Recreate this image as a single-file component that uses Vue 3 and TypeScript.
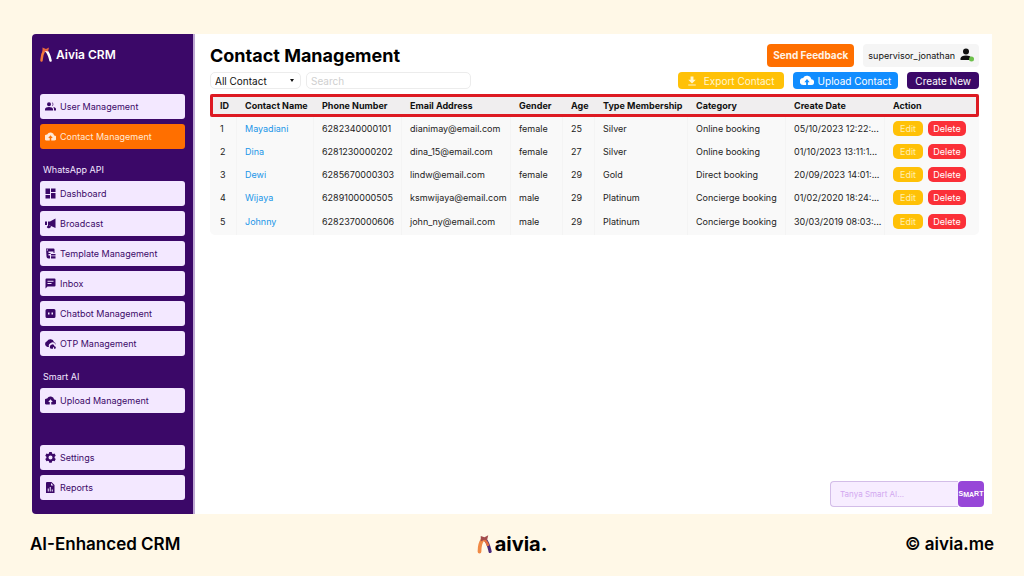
<script setup lang="ts">
import { ref } from 'vue'

interface NavItem {
  label: string
  icon: string
  active?: boolean
}
interface NavGroup {
  title?: string
  items: NavItem[]
}
interface Contact {
  id: number
  name: string
  phone: string
  email: string
  gender: string
  age: number
  membership: string
  category: string
  created: string
}

const icons: Record<string, string> = {
  users:
    'M9 11.500a4 4 0 1 0 0-8 4 4 0 0 0 0 8zM1 20v-2.500c0-3 4-4.500 8-4.500s8 1.500 8 4.500V20zM15 3.700a4 4 0 0 1 0 7.600 6 6 0 0 0 0-7.600zM18.800 20H23v-2.500c0-2.500-2.500-3.800-5.500-4.300 1 1 1.500 2.400 1.500 4.300z',
  cloud:
    'M19.400 10A7.500 7.500 0 0 0 5.300 8 6 6 0 0 0 6 20h4.500v-5H7.500L12 9.500l4.500 5.500h-3v5H19a5 5 0 0 0 .4-10z',
  dashboard: 'M2 2h9v11H2zM13 2h9v7h-9zM2 15h9v7H2zM13 11h9v11h-9z',
  megaphone:
    'M22 2v19l-9-4a4.500 4.500 0 0 1-8.500 2L7 16h2.500a1.500 1.500 0 0 0 2 1V16H7V8h4zM1 8h4v7H1z',
  template:
    'M3 2h15a2 2 0 0 1 2 2v7h-2V8H8v3h4v2H8v3h3v6H8a4 4 0 0 1-4-4zM13 13h9v3h-9zM13 17.500h9V22h-9zM4.500 4v2H7V4z',
  inbox:
    'M4 2h16a2 2 0 0 1 2 2v12a2 2 0 0 1-2 2H6l-4 4V4a2 2 0 0 1 2-2zM6 6.500v2h12v-2zM6 11v2h8v-2z',
  chatbot:
    'M5 3h14a3 3 0 0 1 3 3v12a3 3 0 0 1-3 3H5a3 3 0 0 1-3-3V6a3 3 0 0 1 3-3zM7 10v4h3v-4zM14 10v4h3v-4z',
  otp:
    'M19 9A7.500 7.500 0 0 0 5 7.500 6 6 0 0 0 6 19h3a6.500 6.500 0 0 1 13-4.500A5 5 0 0 0 19 9zM11 19a4.500 4.500 0 0 1 9-1.500 2.600 2.600 0 0 1 1 5h-2v-3h-2v3h-3a2.500 2.500 0 0 1-3-3.500z',
  gear:
    'M9.500 1h5l.6 3 2 1.200 3-1 2.400 4.200-2.300 2v2.600l2.300 2-2.400 4.300-3-1-2 1.200-.6 3h-5l-.6-3-2-1.200-3 1L1.500 15l2.300-2v-2.600l-2.300-2L3.900 4.200l3 1 2-1.200zM12 8a4 4 0 1 0 0 8 4 4 0 0 0 0-8z',
  report:
    'M5 1h9l6 6v16H3V3a2 2 0 0 1 2-2zM13 3v5h5zM6.500 14v6h2v-6zM10.500 11v9h2v-9zM14.500 16v4h2v-4z',
  download: 'M8.500 1h7v8H21l-9 9-9-9h5.500zM3 20.500h18V23H3z',
}

const groups: NavGroup[] = [
  {
    items: [
      { label: 'User Management', icon: 'users' },
      { label: 'Contact Management', icon: 'cloud', active: true },
    ],
  },
  {
    title: 'WhatsApp API',
    items: [
      { label: 'Dashboard', icon: 'dashboard' },
      { label: 'Broadcast', icon: 'megaphone' },
      { label: 'Template Management', icon: 'template' },
      { label: 'Inbox', icon: 'inbox' },
      { label: 'Chatbot Management', icon: 'chatbot' },
      { label: 'OTP Management', icon: 'otp' },
    ],
  },
  { title: 'Smart AI', items: [{ label: 'Upload Management', icon: 'cloud' }] },
  {
    items: [
      { label: 'Settings', icon: 'gear' },
      { label: 'Reports', icon: 'report' },
    ],
  },
]

const columns = [
  { key: 'id', label: 'ID' },
  { key: 'name', label: 'Contact Name' },
  { key: 'phone', label: 'Phone Number' },
  { key: 'email', label: 'Email Address' },
  { key: 'gender', label: 'Gender' },
  { key: 'age', label: 'Age' },
  { key: 'membership', label: 'Type Membership' },
  { key: 'category', label: 'Category' },
  { key: 'created', label: 'Create Date' },
  { key: 'action', label: 'Action' },
]

const contacts: Contact[] = [
  { id: 1, name: 'Mayadiani', phone: '6282340000101', email: 'dianimay@email.com', gender: 'female', age: 25, membership: 'Silver', category: 'Online booking', created: '05/10/2023 12:22:...' },
  { id: 2, name: 'Dina', phone: '6281230000202', email: 'dina_15@email.com', gender: 'female', age: 27, membership: 'Silver', category: 'Online booking', created: '01/10/2023 13:11:1...' },
  { id: 3, name: 'Dewi', phone: '6285670000303', email: 'lindw@email.com', gender: 'female', age: 29, membership: 'Gold', category: 'Direct booking', created: '20/09/2023 14:01:...' },
  { id: 4, name: 'Wijaya', phone: '6289100000505', email: 'ksmwijaya@email.com', gender: 'male', age: 29, membership: 'Platinum', category: 'Concierge booking', created: '01/02/2020 18:24:...' },
  { id: 5, name: 'Johnny', phone: '6282370000606', email: 'john_ny@email.com', gender: 'male', age: 29, membership: 'Platinum', category: 'Concierge booking', created: '30/03/2019 08:03:...' },
]

const filter = ref('All Contact')
const search = ref('')
const question = ref('')
</script>

<template>
  <div class="page">
    <div class="window">
      <aside class="sidebar">
        <div class="brand">
          <svg class="brand-mark" viewBox="0 0 24 30" aria-hidden="true">
            <path d="M8 8C4 14 4 20 3 27" stroke="#f47a3c" stroke-width="5" fill="none" stroke-linecap="round" />
            <path d="M12 7c6 5 7 12 9 20" stroke="#fff" stroke-width="5" fill="none" stroke-linecap="round" />
            <path d="M5 1l7 3 6-3-2 8-5-1-6 3z" fill="#e9683f" />
          </svg>
          <span>Aivia CRM</span>
        </div>
        <nav class="nav">
          <section v-for="(group, g) in groups" :key="g" class="group">
            <h2 v-if="group.title" class="group-title">{{ group.title }}</h2>
            <a
              v-for="item in group.items"
              :key="item.label"
              href="#"
              class="nav-item"
              :class="{ active: item.active }"
            >
              <svg class="nav-icon" viewBox="1 1 22 22" aria-hidden="true">
                <path :d="icons[item.icon]" fill="currentColor" fill-rule="evenodd" />
              </svg>
              <span>{{ item.label }}</span>
            </a>
          </section>
        </nav>
      </aside>

      <main class="content">
        <header class="top">
          <h1>Contact Management</h1>
          <div class="top-actions">
            <button type="button" class="feedback">Send Feedback</button>
            <button type="button" class="user">
              <span>supervisor_jonathan</span>
              <svg class="user-icon" viewBox="0 0 28 28" aria-hidden="true">
                <circle cx="12" cy="7" r="6" fill="#111" />
                <path d="M1 24v-3c0-4 5-6 11-6s11 2 11 6v3z" fill="#111" />
                <circle cx="23" cy="22" r="5" fill="#6cc04a" />
              </svg>
            </button>
          </div>
        </header>

        <div class="toolbar">
          <div class="select-wrap">
            <select v-model="filter" class="field" aria-label="Contact filter">
              <option>All Contact</option>
            </select>
          </div>
          <input v-model="search" class="field search" type="text" placeholder="Search" aria-label="Search" />
          <div class="tool-actions">
            <button type="button" class="tool export">
              <svg class="export-icon" viewBox="0 0 24 24" aria-hidden="true">
                <path :d="icons.download" fill="currentColor" />
              </svg>
              Export Contact
            </button>
            <button type="button" class="tool upload">
              <svg class="upload-icon" viewBox="0 1 24 24" aria-hidden="true">
                <path :d="icons.cloud" fill="currentColor" />
              </svg>
              Upload Contact
            </button>
            <button type="button" class="tool create">Create New</button>
          </div>
        </div>

        <table class="contacts">
          <colgroup>
            <col v-for="col in columns" :key="col.key" :class="'col-' + col.key" />
          </colgroup>
          <thead>
            <tr>
              <th v-for="col in columns" :key="col.key" scope="col">{{ col.label }}</th>
            </tr>
          </thead>
          <tbody>
            <tr v-for="c in contacts" :key="c.id">
              <td>{{ c.id }}</td>
              <td><a href="#" class="name">{{ c.name }}</a></td>
              <td>{{ c.phone }}</td>
              <td>{{ c.email }}</td>
              <td>{{ c.gender }}</td>
              <td>{{ c.age }}</td>
              <td>{{ c.membership }}</td>
              <td>{{ c.category }}</td>
              <td>{{ c.created }}</td>
              <td>
                <div class="row-actions">
                  <button type="button" class="edit">Edit</button>
                  <button type="button" class="delete">Delete</button>
                </div>
              </td>
            </tr>
          </tbody>
        </table>
      </main>

      <form class="smart" @submit.prevent>
        <input v-model="question" type="text" placeholder="Tanya Smart AI..." aria-label="Tanya Smart AI" />
        <button type="submit" aria-label="Smart AI">
          <svg viewBox="0 0 26 26" aria-hidden="true">
            <text class="smart-text" x="13" y="16" text-anchor="middle" dy="-1 1 0 -1 0">SMART</text>
          </svg>
        </button>
      </form>
    </div>

    <footer class="footer">
      <span>AI-Enhanced CRM</span>
      <div class="logo">
        <svg class="logo-mark" viewBox="0 0 24 30" aria-hidden="true">
          <path d="M13 8c5 5 6 11 8 19" stroke="#4a2a7b" stroke-width="5" fill="none" stroke-linecap="round" />
          <path d="M12 8c3 3 5 6 6 10" stroke="#e8703c" stroke-width="4" fill="none" />
          <path d="M9 8C4 14 4 20 4 27" stroke="#f08a45" stroke-width="6" fill="none" stroke-linecap="round" />
          <path d="M6 2l6 2 6-3-2 8-4-1-6 3z" fill="#a34c4c" />
        </svg>
        <span>aivia.</span>
      </div>
      <span class="site">© aivia.me</span>
    </footer>
  </div>
</template>

<style>
body {
  margin: 0;
  background: #fff8e7;
}
</style>

<style scoped>
.page,
.page * {
  box-sizing: border-box;
}
.page {
  min-height: 100vh;
  display: flex;
  flex-direction: column;
  padding: 34px 32px 2px;
  background: #fff8e7;
  color: #111;
  font-family: Inter, "Liberation Sans", sans-serif;
}
button,
input,
select {
  font-family: inherit;
  margin: 0;
}
button {
  border: 0;
  cursor: pointer;
}
a {
  text-decoration: none;
}
.window {
  position: relative;
  flex: 1;
  display: flex;
  background: #fff;
  border-radius: 4px 0 0 4px;
}
.sidebar {
  width: 163px;
  flex: none;
  padding: 10px 8px 13px;
  background: #3b0868;
  border-right: 2px solid #bfa9d3;
  border-radius: 4px 0 0 4px;
}
.brand {
  display: flex;
  align-items: center;
  gap: 4px;
  height: 20px;
  color: #fff;
  font-size: 12px;
  font-weight: 600;
}
.brand-mark {
  width: 12px;
  height: 15px;
}
.nav {
  display: flex;
  flex-direction: column;
  margin-top: 30px;
}
.group {
  display: flex;
  flex-direction: column;
  gap: 5px;
}
.group:last-child {
  margin-top: 32px;
}
.group-title {
  height: 27px;
  margin: 0;
  padding: 14px 3px 0;
  color: #f3e8ff;
  font-size: 9px;
  line-height: 14px;
  font-weight: 400;
}
.nav-item {
  display: flex;
  align-items: center;
  gap: 4px;
  height: 25px;
  padding: 0 5px;
  border-radius: 3px;
  background: #f3e8ff;
  color: #3b0868;
  font-size: 9px;
  font-weight: 400;
  white-space: nowrap;
}
.nav-item.active {
  background: #ff6f00;
  color: #ffe9d6;
}
.nav-icon {
  width: 11px;
  height: 11px;
}
.content {
  flex: 1;
  min-width: 0;
  padding: 9px 13px 0 15px;
}
.top {
  display: flex;
  align-items: center;
  justify-content: space-between;
  height: 24px;
}
h1 {
  margin: 0;
  font-size: 18px;
  font-weight: 700;
  color: #000;
}
.top-actions {
  display: flex;
  gap: 9px;
}
.feedback {
  height: 23px;
  padding: 0 6px;
  border-radius: 4px;
  background: #ff6f00;
  color: #fff3e6;
  font-size: 10px;
  font-weight: 700;
}
.user {
  display: flex;
  align-items: center;
  gap: 5px;
  height: 23px;
  padding: 0 5px;
  border-radius: 4px;
  background: #f5f5f5;
  color: #111;
  font-size: 9px;
}
.user-icon {
  width: 14px;
  height: 14px;
}
.toolbar {
  display: flex;
  align-items: center;
  gap: 5px;
  height: 17px;
  margin: 5px 0;
}
.field {
  height: 17px;
  padding: 0 4px;
  border: 1px solid #ececec;
  border-radius: 5px;
  background: #fff;
  color: #111;
  font-size: 10px;
  outline: none;
}
.select-wrap {
  position: relative;
  width: 91px;
}
.select-wrap select {
  display: block;
  width: 100%;
  appearance: none;
}
.select-wrap::after {
  content: "";
  position: absolute;
  right: 7px;
  top: 7px;
  border: 2px solid transparent;
  border-top: 3px solid #111;
  border-bottom: 0;
}
.search {
  width: 165px;
}
.search::placeholder {
  color: #cfcfcf;
}
.tool-actions {
  display: flex;
  gap: 9px;
  margin-left: auto;
}
.tool {
  display: flex;
  align-items: center;
  height: 17px;
  padding: 0 8px;
  border-radius: 4px;
  color: #fff;
  font-size: 10px;
  white-space: nowrap;
}
.export {
  gap: 7px;
  padding: 0 9px;
  background: #ffc107;
  color: #fff6d0;
}
.upload {
  gap: 4px;
  padding: 0 7px;
  background: #118dff;
}
.create {
  background: #3b0868;
}
.export-icon {
  width: 10px;
  height: 10px;
}
.upload-icon {
  width: 14px;
  height: 14px;
}
.contacts {
  width: 100%;
  table-layout: fixed;
  border-collapse: separate;
  border-spacing: 0;
  font-size: 9px;
  line-height: 13px;
}
.col-id { width: 27px; }
.col-name { width: 77px; }
.col-phone { width: 88px; }
.col-email { width: 109px; }
.col-gender { width: 52px; }
.col-age { width: 32px; }
.col-membership { width: 93px; }
.col-category { width: 98px; }
.col-created { width: 99px; }
.col-action { width: 94px; }
th,
td {
  padding: 0 0 0 8px;
  text-align: left;
  white-space: nowrap;
}
th:first-child,
td:first-child {
  padding-left: 10px;
}
th {
  height: 23px;
  background: #f0eeef;
  font-weight: 700;
}
thead tr {
  outline: 3px solid #dd1a22;
  outline-offset: -3px;
  border-radius: 2px;
}
td {
  height: 23px;
  background: #f9f9f9;
  border-right: 1px solid #f4f4f4;
  color: #222;
}
td:last-child {
  border-right: 0;
}
tbody tr:last-child td {
  height: 26px;
  padding-bottom: 2px;
}
tbody tr:last-child td:last-child {
  border-bottom-right-radius: 5px;
}
tbody tr:last-child td:first-child {
  border-bottom-left-radius: 5px;
}
.name {
  color: #2196e8;
}
.row-actions {
  display: flex;
  gap: 5px;
}
.edit,
.delete {
  height: 15px;
  padding: 0;
  border-radius: 5px;
  color: #fff;
  font-size: 9px;
}
.edit {
  width: 30px;
  background: #ffc107;
  color: #fff0b0;
}
.delete {
  width: 38px;
  background: #fb3038;
}
.smart {
  position: absolute;
  right: 8px;
  bottom: 7px;
  display: flex;
  width: 154px;
  height: 26px;
}
.smart input {
  flex: 1;
  min-width: 0;
  padding: 0 9px;
  border: 1px solid #d3bde8;
  border-right: 0;
  border-radius: 4px 0 0 4px;
  background: #f7edff;
  font-size: 8px;
  outline: none;
}
.smart input::placeholder {
  color: #d2a8f0;
}
.smart button {
  width: 26px;
  height: 26px;
  padding: 0;
  border-radius: 4px;
  background: #9747d8;
}
.smart svg {
  display: block;
  width: 26px;
  height: 26px;
}
.smart-text {
  fill: #fff;
  font-family: "Liberation Sans", sans-serif;
  font-size: 7px;
  font-weight: 700;
}
.footer {
  display: grid;
  grid-template-columns: 1fr auto 1fr;
  align-items: center;
  height: 60px;
  margin: 0 -2px;
  color: #000;
  font-size: 17px;
  font-weight: 600;
}
.logo {
  display: flex;
  align-items: center;
  gap: 3px;
  font-size: 20px;
  font-weight: 700;
}
.logo-mark {
  width: 15px;
  height: 20px;
}
.site {
  text-align: right;
}
</style>
